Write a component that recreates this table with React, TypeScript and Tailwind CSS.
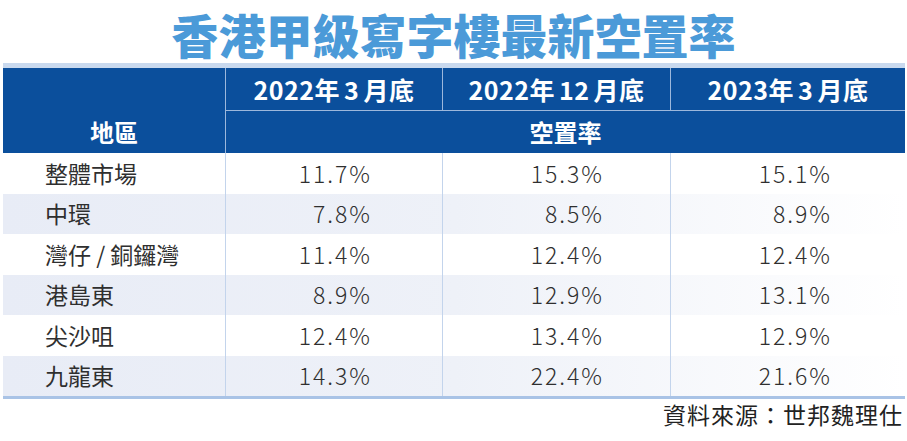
import React from 'react';

interface Row {
    area: string;
    values: string[];
}

const rows: Row[] = [
    { area: '整體市場', values: ['11.7%', '15.3%', '15.1%'] },
    { area: '中環', values: ['7.8%', '8.5%', '8.9%'] },
    { area: '灣仔 / 銅鑼灣', values: ['11.4%', '12.4%', '12.4%'] },
    { area: '港島東', values: ['8.9%', '12.9%', '13.1%'] },
    { area: '尖沙咀', values: ['12.4%', '13.4%', '12.9%'] },
    { area: '九龍東', values: ['14.3%', '22.4%', '21.6%'] },
];

// year, month, with the little gaps the print layout puts around the month number
const periods = [
    { year: '2022年', month: '3' },
    { year: '2022年', month: '12' },
    { year: '2023年', month: '3' },
];

const cjk = { fontFamily: '"Noto Sans CJK TC", "Noto Sans", sans-serif' };

export default function App() {
    return (
        <div className="w-[907px] h-[441px] bg-white overflow-hidden" style={cjk}>
            {/* title */}
            <div className="h-[63px] pt-[9px] text-center">
                <h1 className="text-[47px] leading-[50px] font-black text-[#4b9ad8]">
                    香港甲級寫字樓最新空置率
                </h1>
            </div>

            <div className="ml-[3px] mr-[2px]">
                {/* header */}
                <div className="border-t-[5px] border-[#c9d9ee]">
                    <div className="grid grid-cols-[222px_217px_228px_235px] bg-[#0b4f9c] text-white font-bold">
                        <div className="h-[42px]" />
                        {periods.map(p => (
                            <div key={p.year + p.month} className="h-[42px] flex items-center justify-center border-l border-[#9db8dc] text-[25px] leading-none tracking-[0.5px]">
                                <span>{p.year}</span>
                                <span className="ml-[4px]">{p.month}</span>
                                <span className="ml-[4px]">月底</span>
                            </div>
                        ))}
                        <div className="h-[43px] flex items-center justify-center text-[24px] leading-none">地區</div>
                        <div className="col-span-3 h-[43px] flex items-center justify-center border-l border-t border-[#9db8dc] text-[24px] leading-none">
                            空置率
                        </div>
                    </div>
                </div>

                {/* body */}
                <div className="border-b-[3px] border-[#a9c3e6]">
                    {rows.map((r, i) => (
                        <div
                            key={r.area}
                            className={`grid grid-cols-[222px_217px_228px_235px] h-[40.5px] text-[#2f2f2f] text-[23px] leading-none ${i % 2 === 1 ? 'bg-gradient-to-r from-[#e8ecf6] via-[#eef1f8] to-white' : 'bg-white'}`}
                        >
                            <div className="flex items-center pl-[42px]">{r.area}</div>
                            {r.values.map((v, j) => (
                                <div
                                    key={j}
                                    className={`flex items-center justify-end border-l border-[#c3d4ec] font-light tracking-[2px] ${j === 0 ? 'pr-[70px]' : j === 1 ? 'pr-[66px]' : 'pr-[73px]'}`}
                                >
                                    {v}
                                </div>
                            ))}
                        </div>
                    ))}
                </div>

                {/* source */}
                <div className="flex justify-end pt-[4px] pr-[2px]">
                    <span className="text-[23px] leading-none text-[#222] tracking-[1px]">資料來源：世邦魏理仕</span>
                </div>
            </div>
        </div>
    );
}
